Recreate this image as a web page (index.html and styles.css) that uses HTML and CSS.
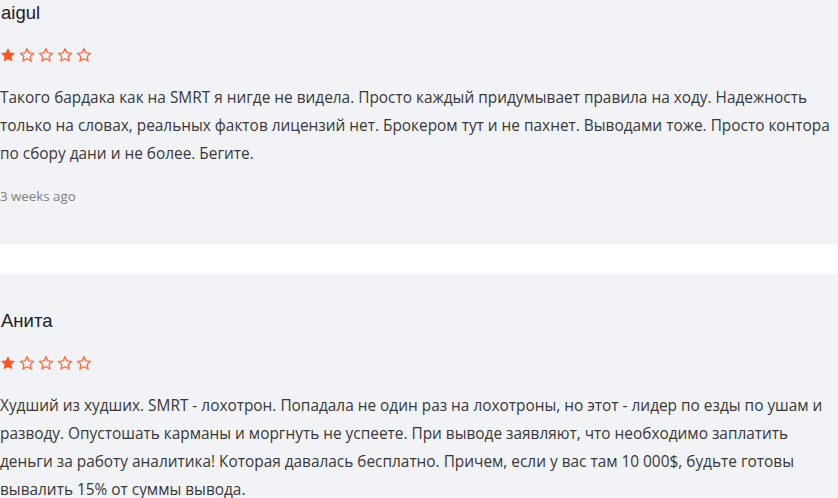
FILE: index.html
```html
<!DOCTYPE html>
<html lang="ru">
<head>
<meta charset="utf-8">
<link rel="stylesheet" href="styles.css">
</head>
<body>
<div class="list">
  <div class="review review-first">
    <div class="name">aigul</div>
    <div class="stars">
      <svg class="star" viewBox="0 0 24 24"><polygon class="full" points="12,1.5 15.2,8.1 22.5,9.1 17.2,14.2 18.5,21.5 12,18 5.5,21.5 6.8,14.2 1.5,9.1 8.8,8.1"/></svg>
      <svg class="star" viewBox="0 0 24 24"><polygon class="empty" points="12,2.5 15,8.7 21.6,9.6 16.8,14.3 18,20.8 12,17.6 6,20.8 7.2,14.3 2.4,9.6 9,8.7"/></svg>
      <svg class="star" viewBox="0 0 24 24"><polygon class="empty" points="12,2.5 15,8.7 21.6,9.6 16.8,14.3 18,20.8 12,17.6 6,20.8 7.2,14.3 2.4,9.6 9,8.7"/></svg>
      <svg class="star" viewBox="0 0 24 24"><polygon class="empty" points="12,2.5 15,8.7 21.6,9.6 16.8,14.3 18,20.8 12,17.6 6,20.8 7.2,14.3 2.4,9.6 9,8.7"/></svg>
      <svg class="star" viewBox="0 0 24 24"><polygon class="empty" points="12,2.5 15,8.7 21.6,9.6 16.8,14.3 18,20.8 12,17.6 6,20.8 7.2,14.3 2.4,9.6 9,8.7"/></svg>
    </div>
    <p class="text">Такого бардака как на SMRT я нигде не видела. Просто каждый придумывает правила на ходу. Надежность только на словах, реальных фактов лицензий нет. Брокером тут и не пахнет. Выводами тоже. Просто контора по сбору дани и не более. Бегите.</p>
    <div class="date">3 weeks ago</div>
  </div>
  <div class="divider"></div>
  <div class="review">
    <div class="name">Анита</div>
    <div class="stars">
      <svg class="star" viewBox="0 0 24 24"><polygon class="full" points="12,1.5 15.2,8.1 22.5,9.1 17.2,14.2 18.5,21.5 12,18 5.5,21.5 6.8,14.2 1.5,9.1 8.8,8.1"/></svg>
      <svg class="star" viewBox="0 0 24 24"><polygon class="empty" points="12,2.5 15,8.7 21.6,9.6 16.8,14.3 18,20.8 12,17.6 6,20.8 7.2,14.3 2.4,9.6 9,8.7"/></svg>
      <svg class="star" viewBox="0 0 24 24"><polygon class="empty" points="12,2.5 15,8.7 21.6,9.6 16.8,14.3 18,20.8 12,17.6 6,20.8 7.2,14.3 2.4,9.6 9,8.7"/></svg>
      <svg class="star" viewBox="0 0 24 24"><polygon class="empty" points="12,2.5 15,8.7 21.6,9.6 16.8,14.3 18,20.8 12,17.6 6,20.8 7.2,14.3 2.4,9.6 9,8.7"/></svg>
      <svg class="star" viewBox="0 0 24 24"><polygon class="empty" points="12,2.5 15,8.7 21.6,9.6 16.8,14.3 18,20.8 12,17.6 6,20.8 7.2,14.3 2.4,9.6 9,8.7"/></svg>
    </div>
    <p class="text">Худший из худших. SMRT - лохотрон. Попадала не один раз на лохотроны, но этот - лидер по езды по ушам и разводу. Опустошать карманы и моргнуть не успеете. При выводе заявляют, что необходимо заплатить деньги за работу аналитика! Которая давалась бесплатно. Причем, если у вас там 10 000$, будьте готовы вывалить 15% от суммы вывода.</p>
  </div>
</div>
</body>
</html>
```
FILE: styles.css
```css
html, body {
  margin: 0;
  padding: 0;
  background: #f2f3f7;
  overflow: hidden;
}
.list {
  width: 838px;
}
.review {
  padding: 34px 0 38px 0;
}
.review-first {
  padding-top: 0;
}
.name {
  font-family: "Liberation Sans", Arial, sans-serif;
  font-size: 18.5px;
  line-height: 22px;
  padding-top: 2px;
  color: #222;
  padding-left: 1px;
}
.stars {
  display: flex;
  gap: 3px;
  margin-top: 23px;
  height: 16px;
}
.star {
  width: 16px;
  height: 16px;
  display: block;
}
.full {
  fill: #ff5420;
}
.empty {
  fill: none;
  stroke: #ff6a3a;
  stroke-width: 1.9;
  stroke-linejoin: miter;
}
.text {
  margin: 21px 0 0 0;
  font-family: "Open Sans", sans-serif;
  font-size: 15.4px;
  line-height: 28px;
  color: #383838;
}
.date {
  margin-top: 18px;
  font-family: "Open Sans", sans-serif;
  font-size: 13.3px;
  line-height: 20px;
  color: #808080;
}
.divider {
  height: 30px;
  background: #fff;
  box-shadow: inset 0 3px 3px -2px rgba(0,0,0,0.03);
}
```
